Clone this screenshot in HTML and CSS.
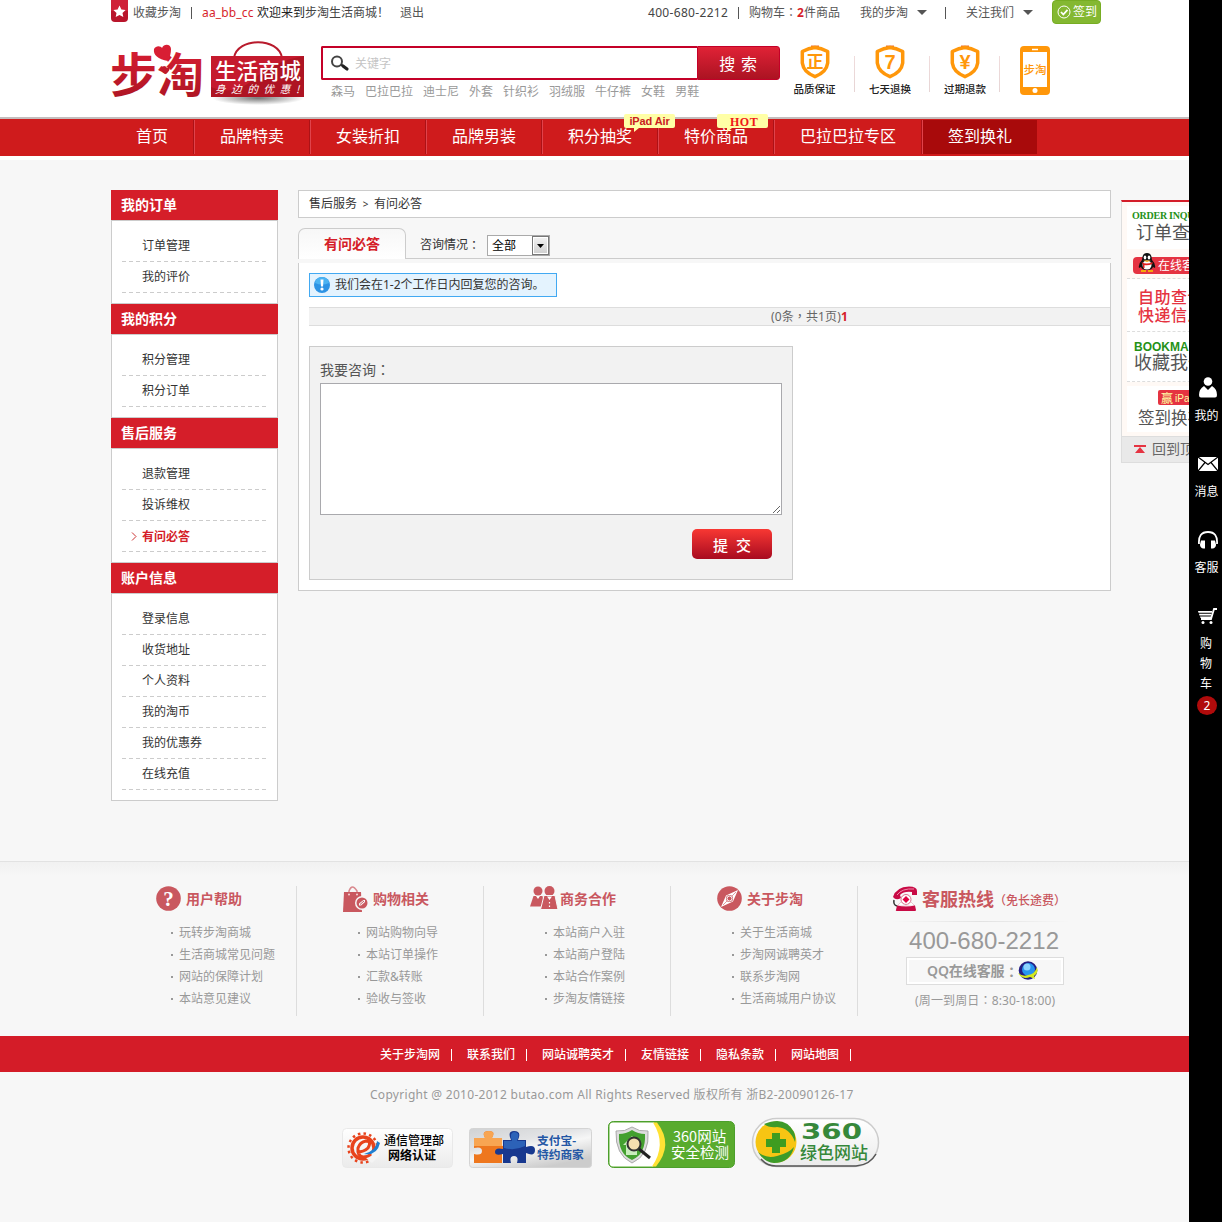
FILE: index.html
```html
<!DOCTYPE html>
<html lang="zh-CN">
<head>
<meta charset="utf-8">
<title>有问必答 - 步淘生活商城</title>
<link rel="stylesheet" href="styles.css">
</head>
<body>
<header class="header">
  <div class="wrap topbar">
    <svg class="mark" width="18" height="24" viewBox="0 0 18 24"><path d="M0 0h17v18q0 4-4 4H4q-4 0-4-4z" fill="#b9152b"/><path d="M0 0h17v11H0z" fill="#cf2138"/><path d="M8.500 5.500l1.900 3.900 4.200.6-3.100 2.900.8 4.200-3.800-2-3.800 2 .8-4.200-3.100-2.900 4.200-.6z" fill="#fff"/></svg>
    <a class="fav">收藏步淘</a><i class="bar"></i>
    <a class="user">aa_bb_cc</a><span class="hello">欢迎来到<b>步淘生活商城<span class="mid">！</span></b></span><a class="quit">退出</a>
    <div class="top-right">
      <span class="phone">400-680-2212</span><i class="bar"></i>
      <a class="cart">购物车<span class="mid" lang="zh-TW">：</span><em>2</em>件商品</a>
      <a class="menu">我的步淘</a><i class="bar wide"></i><a class="menu">关注我们</a>
      <a class="sign"><svg width="14" height="14" viewBox="0 0 14 14" fill="none" stroke="#fff"><circle cx="7" cy="7" r="6"/><path d="M4 7l2.300 2.500L10.500 4.800" stroke-width="1.800"/></svg>签到</a>
    </div>
  </div>
  <div class="wrap masthead">
    <svg class="logo" width="196" height="70" viewBox="0 0 196 70">
      <defs><linearGradient id="red" x1="0" y1="0" x2="0" y2="1"><stop offset="0" stop-color="#e01f35"/><stop offset="1" stop-color="#a81422"/></linearGradient>
      <radialGradient id="shade"><stop offset="0" stop-color="#777"/><stop offset="1" stop-color="#fff"/></radialGradient></defs>
      <text x="-1" y="53" class="logo-word" fill="url(#red)">步</text><text x="46" y="53" class="logo-word" fill="url(#red)">淘</text>
      <path d="M42 8h15v14H46z" fill="#fff"/>
      <path d="M57 22c-10-2-15-6-14-12 2-4 7-3 8-1 2-5 9-4 9 1 0 4-1 8-3 12z" fill="#d81e34"/>
      <path d="M55 35c-5-2-6-6-2-8q2 0 3 2c3-1 4 2-1 6z" fill="#c01a2c"/>
      <ellipse cx="147" cy="59" rx="46" ry="7" fill="url(#shade)"/>
      <path d="M123 19C126-2 168-2 171 19" fill="none" stroke="#b81a2c" stroke-width="2"/>
      <path d="M100 17h93v41h-93z" fill="#ae1423"/><path d="M100 17h93q-30 5-50 23T100 48z" fill="#c51a2e"/>
      <text x="104" y="40" class="logo-sub">生活商城</text><text x="104" y="54" class="logo-slogan">身边的优惠!</text>
    </svg>
    <div class="search">
      <form class="search-row">
        <label class="field"><svg width="20" height="17" viewBox="0 0 20 17"><circle cx="7" cy="6.500" r="5" fill="none" stroke="#444" stroke-width="2"/><path d="M11 9.500l2 1.500" stroke="#333" stroke-width="2"/><path d="M13 11l4 3" stroke="#222" stroke-width="3.200" stroke-linecap="round"/></svg><input placeholder="关键字"></label>
        <button type="button">搜 索</button>
      </form>
      <p class="hotwords"><a>森马</a><a>巴拉巴拉</a><a>迪士尼</a><a>外套</a><a>针织衫</a><a>羽绒服</a><a>牛仔裤</a><a>女鞋</a><a>男鞋</a></p>
    </div>
    <ul class="promises">
      <li><svg width="32" height="34" viewBox="0 0 32 34"><path d="M12 .5h8v2h-8z" fill="#e87030"/><path d="M16 2.500Q22 3 28.700 6.500V18Q27.500 27 16 31.700 4.500 27 3.300 18V6.500Q10 3 16 2.500z"/><text x="16" y="23" class="zheng">正</text></svg>品质保证</li>
      <li><svg width="32" height="34" viewBox="0 0 32 34"><path d="M12 .5h8v2h-8z" fill="#e87030"/><path d="M16 2.500Q22 3 28.700 6.500V18Q27.500 27 16 31.700 4.500 27 3.300 18V6.500Q10 3 16 2.500z"/><text x="16" y="24" class="seven">7</text></svg>七天退换</li>
      <li><svg width="32" height="34" viewBox="0 0 32 34"><path d="M12 .5h8v2h-8z" fill="#e87030"/><path d="M16 2.500Q22 3 28.700 6.500V18Q27.500 27 16 31.700 4.500 27 3.300 18V6.500Q10 3 16 2.500z"/><text x="16" y="24" class="seven">¥</text></svg>过期退款</li>
    </ul>
    <svg class="mobile" width="31" height="50" viewBox="0 0 31 50"><rect x="0" y="0" width="30" height="49" rx="4" fill="#ff970a"/><path d="M3 6h24v35H3z" fill="#fff"/><path d="M12 3.500h6" stroke="#fff" stroke-width="1.500"/><circle cx="15" cy="44.500" r="2.500" fill="#fff"/><text x="15" y="28" class="mobile-word">步淘</text></svg>
  </div>
</header>
<nav class="nav">
  <ul class="wrap">
    <li>首页</li><li>品牌特卖</li><li>女装折扣</li><li>品牌男装</li>
    <li>积分抽奖<span class="tip ipad">iPad Air</span></li><li>特价商品<span class="tip hot">HOT</span></li>
    <li>巴拉巴拉专区</li><li class="on">签到换礼</li>
  </ul>
</nav>

<div class="wrap content">
  <aside class="side">
    <h3>我的订单</h3><ul><li>订单管理</li><li>我的评价</li></ul>
    <h3>我的积分</h3><ul><li>积分管理</li><li>积分订单</li></ul>
    <h3>售后服务</h3><ul><li>退款管理</li><li>投诉维权</li><li class="current"><svg width="6" height="9" viewBox="0 0 6 9"><path d="M1 .5l4 4-4 4" fill="none" stroke="#c33"/></svg>有问必答</li></ul>
    <h3>账户信息</h3><ul><li>登录信息</li><li>收货地址</li><li>个人资料</li><li>我的淘币</li><li>我的优惠券</li><li>在线充值</li></ul>
  </aside>
  <main class="main">
    <div class="crumb">售后服务<span>&gt;</span>有问必答</div>
    <div class="tabs">
      <h2>有问必答</h2>
      <div class="filter">咨询情况<span class="mid" lang="zh-TW">：</span>
        <div class="select"><span>全部</span><i><svg width="7" height="4" viewBox="0 0 7 4"><path d="M0 0h7L3.500 4z"/></svg></i></div>
      </div>
    </div>
    <div class="panel">
      <div class="notice"><svg width="16" height="16" viewBox="0 0 16 16"><circle cx="8" cy="8" r="8" fill="#2d93e4"/><path d="M1 6a7 6 0 0 1 14 0q-7 3-14 0z" fill="#4bb3f2"/><path d="M6.500 2.500h3L9 9.500H7z" fill="#fff"/><circle cx="8" cy="12" r="1.600" fill="#fff"/></svg>我们会在1-2个工作日内回复您的咨询。</div>
      <div class="pager">(0条<span class="mid" lang="zh-TW">，</span>共1页)<b>1</b></div>
      <form class="ask">
        <label for="question">我要咨询<span class="mid" lang="zh-TW">：</span></label>
        <textarea id="question"></textarea>
        <button type="button">提&nbsp; 交</button>
      </form>
    </div>
  </main>
</div>

<footer class="footer">
  <div class="wrap help">
    <section><h4><svg width="25" height="26" viewBox="0 0 25 26"><circle cx="12.500" cy="12.500" r="12.300" fill="#c9585f"/><text x="12.500" y="20" class="ask-mark">?</text></svg>用户帮助</h4>
      <ul><li>玩转步淘商城</li><li>生活商城常见问题</li><li>网站的保障计划</li><li>本站意见建议</li></ul></section>
    <section><h4><svg width="25" height="26" viewBox="0 0 25 26"><path d="M6 8V5q3-8 8 0v3" fill="none" stroke="#d9898e" stroke-width="1.500"/><path d="M1 6h17l1 20H0z" fill="#c9585f"/><circle cx="6" cy="8.500" r="1" fill="#f7d9da"/><circle cx="14" cy="8.500" r="1" fill="#f7d9da"/><circle cx="19" cy="17" r="7" fill="#f7f7f7"/><circle cx="19" cy="17" r="5.500" fill="#c9585f"/><path d="M16 19.500v-2l4.500-3.500h1.500v2l-4 3.500z" fill="#f7f7f7"/><path d="M17 18.500l4-3.500" stroke="#c9585f"/></svg>购物相关</h4>
      <ul><li>网站购物向导</li><li>本站订单操作</li><li>汇款&amp;转账</li><li>验收与签收</li></ul></section>
    <section class="coop"><h4><svg width="28" height="26" viewBox="0 0 28 26"><g fill="#c9585f"><circle cx="8" cy="5" r="4.500"/><path d="M3.500 10h9l2 10.500H0z"/><circle cx="19.500" cy="5" r="5"/><path d="M14 9.500h11l3 14H10.500z" stroke="#f7f7f7"/></g><path d="M6 10l2 3 2-3zM17 10.500l2.500 3.500 2.500-3.500z" fill="#fff"/><path d="M19.500 16v5" stroke="#fff" stroke-width="1.200" stroke-dasharray="1.500 2"/></svg>商务合作</h4>
      <ul><li>本站商户入驻</li><li>本站商户登陆</li><li>本站合作案例</li><li>步淘友情链接</li></ul></section>
    <section><h4><svg width="25" height="26" viewBox="0 0 25 26"><circle cx="12.500" cy="12.500" r="12.300" fill="#c9585f"/><path d="M21 4L16 15.500 4 21 9 9.500z" fill="#fff"/><circle cx="12.500" cy="12.500" r="3.500" fill="#c9585f"/><circle cx="12.500" cy="12.500" r="2.500" fill="none" stroke="#fff"/><path d="M19 6l-4 4M10 15l-4 4" stroke="#c9585f" stroke-width=".6"/></svg>关于步淘</h4>
      <ul><li>关于生活商城</li><li>步淘网诚聘英才</li><li>联系步淘网</li><li>生活商城用户协议</li></ul></section>
    <div class="hotline">
      <h4><svg width="27" height="26" viewBox="0 0 27 26"><path d="M1 11Q4 1 17 .5q8 0 8 4.500v4h-5V6Q12 5 8 9l1 3q-5 3-8-1z" fill="#c80a45"/><path d="M5 9Q10 2 22 3" stroke="#f08cab" fill="none"/><circle cx="14" cy="13.500" r="5" fill="#fff" stroke="#dc6c8a"/><path d="M14 10l3.500 3.500-3.500 3.500-3.500-3.500z" fill="#e00040"/><path d="M5 20l4-4q5 6 10 0l4 4z" fill="#fff" stroke="#d898a8" stroke-width=".5"/><path d="M5 19.500q9 2 18 0l1 4.500q0 1-1 1H5q-2 0-1-1z" fill="#c80a45"/><path d="M2 14q-1 5 3 6" stroke="#333" stroke-width="1.500" fill="none"/></svg><span>客服热线</span><small><i class="mid" lang="zh-TW">（</i>免长途费<i class="mid" lang="zh-TW">）</i></small></h4>
      <p class="number">400-680-2212</p>
      <p class="qq">QQ在线客服<span class="mid" lang="zh-TW">：</span><svg width="21" height="20" viewBox="0 0 21 20"><circle cx="10" cy="9.500" r="9.300" fill="#241e83"/><circle cx="10.500" cy="8.500" r="6.500" fill="#2695f0"/><circle cx="9" cy="6" r="3.500" fill="#8dd3ff"/><path d="M0 12q5 4 10 2 7-1 9-8 2 6-3 9l1 3-5-2Q4 19 0 12z" fill="#d4e91e"/></svg></p>
      <p class="hours">(周一到周日<span class="mid" lang="zh-TW">：</span>8:30-18:00)</p>
    </div>
  </div>
  <ul class="links"><li>关于步淘网</li><li>联系我们</li><li>网站诚聘英才</li><li>友情链接</li><li>隐私条款</li><li>网站地图</li></ul>
  <p class="copy">Copyright @ 2010-2012 butao.com All Rights Reserved 版权所有 浙B2-20090126-17</p>
  <div class="certs">
    <svg width="111" height="40" viewBox="0 0 111 40"><defs><linearGradient id="pale" x1="0" y1="0" x2="0" y2="1"><stop offset="0" stop-color="#fff"/><stop offset="1" stop-color="#ebebeb"/></linearGradient></defs><rect x=".5" y=".5" width="110" height="39" rx="4" fill="url(#pale)" stroke="#e9e9e9"/><circle cx="21" cy="20" r="14.500" fill="none" stroke="#e8431c" stroke-width="2.500" stroke-dasharray="2.500 3.200"/><circle cx="21" cy="20" r="11" fill="none" stroke="#e8431c" stroke-width="3.500"/><path d="M24 30l13-14v12l-7 7z" fill="#f4f4f4"/><path d="M15 24q7 0 11-4 4-7-2-7-6 1-8 7-1 8 5 9 5 0 8-3" fill="none" stroke="#e8431c" stroke-width="3"/><path d="M35 13q0 9-13 13 13 2 16-11z" fill="#1f7ed0"/><text x="42" y="17" class="cert1">通信管理部</text><text x="46" y="32" class="cert1 bold">网络认证</text></svg>
    <svg width="123" height="40" viewBox="0 0 123 40"><defs><linearGradient id="steel" x1="0" y1="0" x2=".6" y2="1"><stop offset="0" stop-color="#d0d2d4"/><stop offset=".4" stop-color="#e2e3e5"/><stop offset=".6" stop-color="#f6f6f6"/><stop offset="1" stop-color="#ccc"/></linearGradient></defs><rect x=".5" y=".5" width="122" height="39" rx="3" fill="url(#steel)" stroke="#d4d4d4"/><path d="M5 10h11q-4-7 4-7 7 0 3 7h10v8q9-3 9 3t-9 4v10H5V26q8 2 8-3t-8-3z" fill="#ee771e"/><path d="M5 10h11q-4-7 4-7 7 0 3 7h10v8H5z" fill="#f8a552"/><path d="M34 12h8q-4-9 3-9 8 0 4 9h8v7q9-3 9 3 0 7-9 3v10h-9q2-7-3-7t-3 7h-8V26q-8 2-8-2 0-5 8-3z" fill="#18388f"/><path d="M35 13h8q-3-8 2-9 7 0 3 9h8v5q-10 5-21 2z" fill="#2c62b8"/><text x="68" y="17" class="cert2">支付宝-</text><text x="68" y="31" class="cert2">特约商家</text></svg>
    <svg width="127" height="47" viewBox="0 0 127 47"><rect x=".5" y=".5" width="126" height="46" rx="5" fill="#59ab2e" stroke="#4c9f2c"/><path d="M5 1.500h41Q63 24 45 45.500H5q-3.500 0-3.500-4V5q0-3.500 3.500-3.500z" fill="#fff"/><path d="M45 1.500h4q17 22-1 44h-4q15-22 1-44z" fill="#ffe234"/><path d="M24 6q7 5 16 4 2 24-16 32Q7 34 8 10q9 1 16-4z" fill="#ddd" stroke="#aaa"/><path d="M24 9q6 4 13 4 1 20-13 26Q10 33 11 13q7 0 13-4z" fill="#43a02f"/><path d="M15 24l9-9 8 9h-3v10H18V24z" fill="#c8edbb"/><circle cx="26" cy="23" r="6.500" fill="#f4dfb0" stroke="#333" stroke-width="2"/><path d="M31 28l11 9" stroke="#222" stroke-width="3"/><text x="65" y="21" class="cert3">360网站</text><text x="63" y="37" class="cert3">安全检测</text></svg>
    <svg width="129" height="51" viewBox="0 0 129 51"><rect x="1.500" y="1.500" width="126" height="48" rx="24" fill="url(#pale)" stroke="#ccc" stroke-width="1.500"/><path d="M10 42q6 7 15 7h80q14-1 20-12" fill="none" stroke="#555" stroke-width="1.500"/><circle cx="25" cy="25" r="20.500" fill="#f7c513"/><path d="M13 7Q34-2 43 15q2 5 1 10-5-14-18-15-8 1-13-3zM7 35q8 7 19 4 12-3 17-9-4 16-20 16-10-1-16-11z" fill="#3d9b2a"/><path d="M21 16h8v6h6v8h-6v6h-8v-6h-6v-8h6z" fill="#3e9c20"/><text x="50" y="22" class="cert4-num" textLength="61" lengthAdjust="spacingAndGlyphs">360</text><text x="49" y="42" class="cert4">绿色网站</text></svg>
  </div>
</footer>

<aside class="quick">
  <div class="quick-body">
    <div class="q1"><b>ORDER INQUIRY</b><span>订单查询</span></div>
    <div class="q2"><svg width="18" height="19" viewBox="0 0 18 19"><path d="M4 7Q4 0 9 0t5 7q4 4 3 8l-2-1q-1 3-6 3t-6-3l-2 1q-1-4 3-8z" fill="#111"/><ellipse cx="9" cy="12" rx="4.500" ry="4.500" fill="#fff"/><ellipse cx="7" cy="4.500" rx="1.300" ry="2" fill="#fff"/><ellipse cx="11" cy="4.500" rx="1.300" ry="2" fill="#fff"/><path d="M5 7.500h8L9 9z" fill="#f5a70a"/><path d="M3.500 9q5 3 11 0v2q-5 2-8 1v3H5v-3z" fill="#e02020"/><path d="M3 17h5v2H3zM10 17h5v2h-5z" fill="#f5a70a"/></svg><span>在线客服</span></div>
    <div class="q3">自助查询<br>快递信息</div>
    <div class="q4"><b>BOOKMARK</b><span>收藏我们</span></div>
    <div class="q5"><b><i>赢</i>iPad</b><span>签到换礼</span></div>
  </div>
  <div class="to-top"><svg width="12" height="8" viewBox="0 0 12 8"><path d="M0 0h12v2H0zM6 2l5 6H1z" fill="#e53341"/></svg>回到顶部</div>
</aside>
<aside class="dock">
  <div class="dock-item"><svg width="20" height="21" viewBox="0 0 20 21" fill="#fff"><circle cx="10" cy="4.500" r="4.300"/><path d="M6 9l4 4 4-4q5 3 5 9 0 2.500-2 2.500H3q-2 0-2-2.500 0-6 5-9z"/></svg>我的</div>
  <div class="dock-item"><svg width="20" height="21" viewBox="0 0 20 21"><path d="M0 4h20v14H0z" fill="#fff"/><path d="M0 4l10 7.500L20 4M0 18l7-8.500M20 18l-7-8.500" stroke="#000" fill="none" stroke-width="1.200"/></svg>消息</div>
  <div class="dock-item"><svg width="20" height="21" viewBox="0 0 20 21"><path d="M1 15q-1-12 9-12t9 12" fill="none" stroke="#fff" stroke-width="1.800"/><path d="M3 11.500h4v8H5q-3-1-3-4zM13 11.500h4l1 4q0 3-3 4h-2z" fill="#fff"/></svg>客服</div>
  <div class="dock-item cart-item"><svg width="20" height="21" viewBox="0 0 20 21"><path d="M19 4h-3l-3 10H3" fill="none" stroke="#fff" stroke-width="1.800"/><path d="M0 6h14v1.800H.500zM1 8.800h12.500v1.700H1.500zM2 11.400h11v1.500H2.500z" fill="#fff"/><circle cx="5" cy="17.500" r="1.500" fill="#fff"/><circle cx="13" cy="17.500" r="1.500" fill="#fff"/></svg><span>购</span><span>物</span><span>车</span><em>2</em></div>
</aside>
</body>
</html>
```
FILE: styles.css
```css
* { box-sizing: border-box; margin: 0; padding: 0; }
body { background: #f7f7f7; color: #333; font: 12px/20px "Noto Sans", "Noto Sans CJK SC", sans-serif; min-height: 1222px; overflow: hidden; text-spacing-trim: space-all; }
ul { list-style: none; }
i, em { font-style: normal; }
svg { display: block; flex: none; }
button, input, textarea { font-family: inherit; }
.wrap { width: 1000px; margin: 0 auto; }
.mid { font-family: "Noto Sans CJK TC", sans-serif; line-height: 1; }

.header { background: #fff; height: 117px; }
.topbar { display: flex; height: 25px; line-height: 25px; color: #555; white-space: nowrap; }
.fav { margin-left: 4px; width: 48px; }
.bar { width: 1px; height: 12px; margin: 7px 10px 0; background: #555; }
.user { width: 55px; color: #d71f2b; letter-spacing: .15px; }
.hello { width: 143px; color: #222; }
.hello b { font-weight: normal; color: #444; }
.top-right { display: flex; margin-left: auto; width: 463px; }
.phone { color: #444; width: 80px; letter-spacing: .32px; }
.cart { width: 91px; margin-right: 20px; }
.cart em { color: #d71f2b; font-weight: bold; }
.menu { display: flex; align-items: center; gap: 9px; }
.menu::after { content: ""; border: 5px solid transparent; border-top-color: #555; border-bottom: 0; }
.bar.wide { margin: 7px 20px 0 18px; }
.sign { display: flex; align-items: center; gap: 2px; margin-left: 19px; padding-left: 4px; width: 49px; height: 24px; border-radius: 4px; background: #84b831; border: 1px solid #77ad23; color: #fff; line-height: 22px; }

.masthead { display: flex; }
.logo { margin-top: 14px; }
.logo-word { font: 700 47px "Noto Sans CJK SC"; }
.logo-sub { font: 500 21.500px "Noto Sans CJK SC"; fill: #fff; }
.logo-slogan { font: italic 10.500px "Noto Sans CJK SC"; fill: #fff; letter-spacing: 5.700px; }
.search { width: 459px; margin: 21px 0 0 14px; }
.search-row { display: flex; height: 34px; }
.field { display: flex; align-items: center; width: 376px; border: 2px solid #c40028; border-right: 0; border-radius: 2px 0 0 2px; padding-left: 7px; background: #fff; }
.field input { border: 0; width: 300px; margin-left: 5px; font-size: 12px; outline: 0; }
.field input::placeholder { color: #c5c5c5; }
.search button { width: 83px; border: 1px solid #c40028; border-radius: 0 3px 3px 0; background: linear-gradient(#e02236, #ab1322); color: #fff; font-size: 16px; letter-spacing: .7px; }
.hotwords { display: flex; gap: 10px; padding-left: 10px; margin-top: 1px; line-height: 22px; color: #999; white-space: nowrap; }
.promises { display: flex; margin-top: 20px; }
.promises li { display: flex; flex-direction: column; align-items: center; gap: 2px; width: 75px; height: 53px; padding-right: 6px; font: 500 10.500px/16px "Noto Sans CJK SC"; color: #222; background: linear-gradient(#f0dcdc, #e6d4d4) right top 11px / 1px 36px no-repeat; }
.promises li:nth-child(2) { padding-right: 5px; }
.promises li:nth-child(3) { width: 70px; padding-right: 0; }
.promises path:nth-of-type(2) { fill: none; stroke: #ff970a; stroke-width: 3.500px; stroke-linejoin: round; }
.promises text { fill: #ff970a; text-anchor: middle; }
.zheng { font: bold 17px "Noto Sans CJK SC"; }
.seven { font: bold 20px "Liberation Sans"; }
.mobile { margin: 21px 0 0 20px; }
.mobile-word { font: 500 11.500px "Noto Sans CJK SC"; fill: #ff970a; text-anchor: middle; }

.nav { height: 43px; border-top: 2px solid #c4bdbd; background: linear-gradient(#cf1b1c, #cf1b1c) 0 0 / 100% 37px no-repeat #fff; }
.nav ul { display: flex; padding-top: 1px; }
.nav li { position: relative; height: 34px; padding: 0 26px 0 25px; border-right: 1px solid #e0434b; box-shadow: inset -1px 0 #ac1216; font-size: 16px; line-height: 33px; color: #fff; }
.nav li.on { background: #a80a0b; padding: 0 25px; border: 0; box-shadow: none; }
.tip { position: absolute; left: 81px; top: -6px; width: 51px; height: 14px; border-radius: 2px; background: #ffffa6; font: bold 11px/15px "Liberation Sans"; letter-spacing: -.1px; color: #c92020; text-align: center; }
.tip::after { content: ""; position: absolute; left: 10px; top: 14px; border: 4px solid transparent; border-top-color: #ffffa6; border-left: 0; border-bottom: 0; border-right-width: 5px; }
.tip.hot { left: 58px; font: bold 12px/16px "Liberation Serif"; letter-spacing: .5px; color: #f01818; padding-left: 3px; }

.content { display: flex; justify-content: space-between; padding-top: 30px; height: 701px; }
.side { width: 167px; }
.side h3 { height: 30px; padding-left: 10px; background: #d51e29; color: #fff; font-size: 14px; line-height: 30px; }
.side ul { padding: 10px; border: 1px solid #ccc; background: #fff; }
.side li { height: 31px; line-height: 29px; padding-left: 20px; background: repeating-linear-gradient(90deg, #ccc 0 4px, transparent 4px 7px) 0 100% / 145px 1px no-repeat; }
.side .current { display: flex; align-items: center; gap: 5px; padding: 0 0 1px 9px; color: #d51e29; font-weight: bold; }
.main { width: 813px; }
.crumb { height: 28px; border: 1px solid #ccc; padding-left: 10px; background: #fff; line-height: 25px; }
.crumb span { display: inline-block; width: 17px; text-align: center; font-size: 10px; }
.tabs { display: flex; height: 31px; margin: 10px 0 4px; }
.tabs h2 { width: 108px; border: 1px solid #ccc; border-bottom: 0; border-radius: 7px 7px 0 0; background: linear-gradient(#f7f7f7, #fff); color: #d51e29; font-size: 14px; line-height: 30px; text-align: center; }
.filter { flex: 1; display: flex; border-bottom: 1px solid #ccc; padding-left: 14px; line-height: 33px; }
.filter .mid { line-height: 33px; }
.select { display: flex; width: 63px; height: 21px; margin: 7px 0 0 7px; border: 1px solid #aaa; background: #fff; color: #000; line-height: 19px; }
.select span { flex: 1; padding-left: 4px; }
.select i { display: flex; align-items: center; justify-content: center; width: 17px; border: 1px solid #777; background: linear-gradient(#f2f2f2, #cfcfcf); box-shadow: inset 0 0 0 1px #fff; }
.panel { height: 328px; border: solid #ccc; border-width: 0 1px 1px; background: #fff; padding: 10px 0 10px 10px; }
.notice { display: flex; align-items: center; gap: 5px; width: 248px; height: 24px; padding-left: 4px; border: 1px solid #42a9f2; background: #e4f3fe; white-space: nowrap; }
.pager { height: 19px; margin-top: 10px; border: solid #ddd; border-width: 1px 0; background: #f2f2f2; color: #666; line-height: 17px; padding-left: 462px; letter-spacing: .12px; }
.pager b { color: #d51e29; }
.ask { display: flex; flex-direction: column; width: 484px; height: 234px; margin-top: 20px; padding: 14px 10px; border: 1px solid #ccc; background: #f2f2f2; }
.ask label { font-size: 14px; line-height: 18px; height: 22px; color: #555; }
.ask textarea { width: 462px; height: 132px; border: 1px solid #a9a9ad; background: #fff; }
.ask button { align-self: flex-end; width: 80px; height: 30px; margin: 14px 10px 0; border: 0; border-radius: 5px; background: linear-gradient(#f83833, #a80b20); color: #fff; font-size: 15px; font-weight: 500; }

.footer { border-top: 1px solid #e2e2e2; background: linear-gradient(#f1f1f1, #f7f7f7 14px); }
.help { display: flex; height: 174px; padding-top: 24px; }
.help section { width: 187px; height: 130px; margin-left: -1px; margin-right: 1px; padding-left: 46px; border-right: 1px solid #ddd; }
.help h4 { display: flex; gap: 5px; height: 26px; font-size: 14px; line-height: 26px; color: #c9585f; font-weight: 600; white-space: nowrap; }
.coop h4 { gap: 2px; }
.ask-mark { font: bold 21px "Liberation Serif"; fill: #fff; text-anchor: middle; }
.help section li { line-height: 22px; color: #999; padding-left: 23px; position: relative; }
.help ul { padding-top: 10px; }
.help li::before { content: ""; position: absolute; left: 15px; top: 10px; width: 2px; height: 2px; background: #999; }
.hotline { width: 210px; padding-left: 32px; margin-left: 1px; color: #999; white-space: nowrap; }
.hotline h4 { gap: 0; height: 36px; background: linear-gradient(90deg, #f7f7f7, #e2e2e2 50%, #f7f7f7) 0 100% / 100% 1px no-repeat; }
.hotline h4 span { font-size: 18px; margin-left: 3px; }
.hotline small { font-size: 12px; line-height: 30px; font-weight: 500; }
.number { font: 24px/28px "Liberation Sans"; margin: 5px 0 2px 17px; letter-spacing: .05px; }
.qq { display: flex; align-items: center; width: 158px; height: 28px; margin-left: 14px; padding-left: 20px; border: 1px solid #ddd; box-shadow: inset 0 0 0 2px #fff; font-size: 14px; font-weight: 600; letter-spacing: -.1px; }
.hours { margin: 6px 0 0 23px; letter-spacing: .15px; }
.links { display: flex; height: 36px; padding-left: 380px; background: #d41c28; color: #fff; font-weight: 500; line-height: 35px; }
.links li { display: flex; align-items: center; }
.links li::after { content: ""; width: 1px; height: 12px; margin: 2px 15px 0 11px; background: #fff; }
.copy { color: #999; line-height: 22px; margin-top: 12px; padding-left: 370px; white-space: nowrap; letter-spacing: .29px; }
.certs { display: flex; align-items: flex-end; gap: 16px; padding: 11px 0 0 342px; }
.cert1 { font: 500 12px "Noto Sans CJK SC"; }
.cert1.bold { font-weight: 700; }
.cert2 { font: 700 11.700px "Noto Sans CJK SC"; fill: #2457a5; }
.cert3 { font: 14.500px "Noto Sans CJK SC"; fill: #fff; }
.cert4-num { font: bold 22px "DejaVu Sans"; fill: #36883a; }
.cert4 { font: 500 17px "Noto Sans CJK SC"; fill: #36883a; }

.quick { position: absolute; left: 1121px; top: 200px; width: 101px; height: 263px; border: 1px solid #ddd; border-top: 2px solid #d41c28; background: #fff9f5; overflow: hidden; white-space: nowrap; display: flex; flex-direction: column; }
.quick-body { flex: 1; padding: 4px 5px; color: #555; }
.quick-body > div { border-bottom: 1px dashed #ddd; }
.quick-body b, .quick-body span { display: block; }
.quick-body .q1 { height: 43px; background: #fff; border: 0; padding: 3px 0 0 5px; }
.q1 b { font: bold 10px/14px "Liberation Serif"; letter-spacing: -.25px; color: #259117; }
.q1 span { font-size: 18px; line-height: 19px; padding-left: 4px; }
.quick-body .q2 { position: relative; height: 30px; padding: 8px 0 0 6px; }
.q2 svg { position: absolute; left: 11px; top: 4px; }
.q2 span { width: 80px; height: 17px; border-radius: 4px; background: #e53341; color: #fff; font-size: 12px; line-height: 17px; padding-left: 25px; }
.q3 { height: 53px; background: #fff; padding: 8px 0 0 11px; font: 500 16px/18px "Noto Sans CJK SC"; letter-spacing: .5px; color: #e53341; }
.q4 { height: 50px; background: #fff; padding: 8px 0 0 7px; }
.q4 b { font: bold 12px/14px "Liberation Sans"; color: #259117; }
.q4 span { font-size: 18px; line-height: 16px; }
.quick-body .q5 { height: 46px; background: #fff; border: 0; padding: 4px 0 0 11px; margin-top: 4px; }
.q5 b { display: flex; width: 60px; height: 15px; margin-left: 20px; padding-left: 3px; gap: 2px; background: #e53341; border-radius: 2px; color: #ffffa6; font: 10px/18px "Liberation Sans"; }
.q5 i { font: 12px/15px "Noto Sans CJK SC"; color: #ffffa6; }
.q5 span { font-size: 16.500px; line-height: 25px; }
.to-top { display: flex; align-items: center; gap: 6px; height: 29px; padding: 0 0 1px 12px; border-top: 1px solid #ddd; background: #e9e9e9; font-size: 14px; color: #666; }
.dock { position: fixed; right: 0; top: 0; width: 33px; height: 100vh; padding-top: 377px; background: #000; color: #fff; }
.dock-item { display: flex; flex-direction: column; align-items: center; height: 76px; gap: 8px; padding-left: 3px; text-indent: -1px; }
.dock-item svg { margin-left: 1px; }
.cart-item { gap: 0; }
.cart-item svg { margin-bottom: 8px; }
.dock-item span { line-height: 20px; margin-left: -1px; }
.cart-item em { width: 20px; height: 20px; margin-top: 2px; border-radius: 50%; background: #b00b0b; text-align: center; text-indent: 0; line-height: 19px; }
```
